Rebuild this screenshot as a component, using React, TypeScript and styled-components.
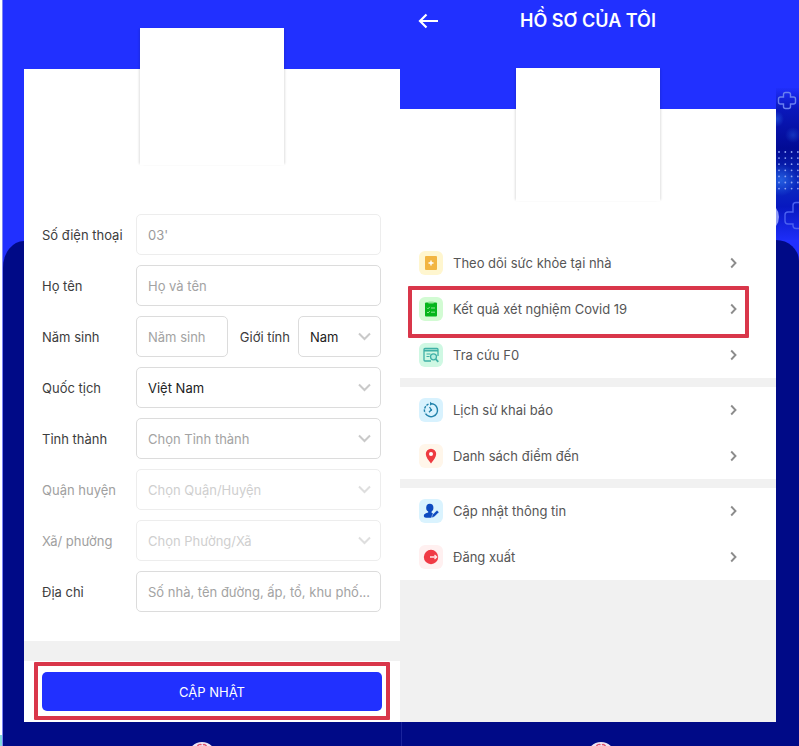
import React from "react";
import styled, { createGlobalStyle, css } from "styled-components";

const BLUE = "#2130ff";
const NAVY = "#000a87";
const GREY = "#f1f1f1";
const RED = "#d9364a";

const GlobalStyle = createGlobalStyle`
  *, *::before, *::after { box-sizing: border-box; }
  html, body { margin: 0; padding: 0; }
  body {
    background: ${NAVY};
    font-family: Inter, "Noto Sans", sans-serif;
    font-size: 13px;
    line-height: 20px;
    color: #3d3d3d;
  }
  button, input, select { font: inherit; margin: 0; }
`;

const Page = styled.div`
  display: grid;
  grid-template-columns: 3px 21px minmax(0, 1fr) minmax(0, 1fr) 23px;
  grid-template-rows: 1fr 24px;
  min-height: 100vh;
  overflow: hidden;
`;

const Edge = styled.div`
  grid-row: 1 / span 2;
  display: flex;
  flex-direction: column;
  justify-content: flex-end;
  background: #fff;
  border-right: 1px solid #7d85f5;

  &::after {
    content: "";
    height: 11px;
    background: #7fd8dc;
  }
`;

const Rail = styled.div`
  display: flex;
  flex-direction: column;
  background: ${BLUE};
`;

const RailTop = styled.div<{ $height: number }>`
  height: ${(p) => p.$height}px;
`;

const RailBase = styled.div<{ $side: "left" | "right" }>`
  flex: 1;
  background: ${NAVY};
  ${(p) =>
    p.$side === "left"
      ? css`border-top-left-radius: 22px 28px;`
      : css`border-top-right-radius: 24px 22px;`}
`;

const Art = styled.svg`
  display: block;
  width: 23px;
  height: 152px;
`;

const Screen = styled.div`
  display: flex;
  flex-direction: column;
  background: #fff;
`;

const Banner = styled.header<{ $height: number }>`
  height: ${(p) => p.$height}px;
  background: ${BLUE};
`;

const TitleBar = styled.div`
  display: grid;
  grid-template-columns: 1fr auto 1fr;
  align-items: center;
  height: 42px;
  padding: 0 18px;
`;

const Title = styled.h1`
  margin: 0;
  color: #fff;
  font-size: 18px;
  font-weight: 600;
  line-height: 40px;
`;

const BackButton = styled.button`
  display: flex;
  justify-self: start;
  padding: 0;
  border: 0;
  background: none;
  color: #fff;
  cursor: pointer;
`;

const Avatar = styled.div<{ $height: number }>`
  width: 144px;
  height: ${(p) => p.$height}px;
  margin: -41px auto 0;
  background: #fff;
  box-shadow: 2px 0 2px -1px rgba(0, 0, 0, 0.12), -2px 0 2px -1px rgba(0, 0, 0, 0.12);
`;

const Form = styled.form`
  display: flex;
  flex: 1;
  flex-direction: column;
`;

const Fields = styled.div`
  display: flex;
  flex-direction: column;
  gap: 10px;
  padding: 49px 19px 29px 18px;
`;

const Row = styled.div`
  display: flex;
  align-items: center;
  height: 41px;
`;

const Label = styled.label<{ $muted?: boolean }>`
  flex: 0 0 94px;
  color: ${(p) => (p.$muted ? "#a0a0a0" : "#3d3d3d")};
  white-space: nowrap;
`;

const InlineLabel = styled.label`
  flex: none;
  margin: 0 8px 0 12px;
  white-space: nowrap;
`;

const fieldBox = css`
  width: 100%;
  height: 41px;
  padding: 0 0 0 11px;
  border: 1px solid #dcdcdc;
  border-radius: 5px;
  background: #fff;
  outline: 0;
  text-overflow: ellipsis;

  &:disabled {
    border-color: #ededed;
    opacity: 1;
  }
`;

const Input = styled.input`
  ${fieldBox}
  flex: 1;
  min-width: 0;
  color: #9b9b9b;

  &::placeholder {
    color: #a3a3a3;
    opacity: 1;
  }
`;

const SelectWrap = styled.div<{ $narrow?: boolean }>`
  position: relative;
  flex: ${(p) => (p.$narrow ? "0 0 83px" : "1")};
  min-width: 0;
`;

const Select = styled.select<{ $tone: "value" | "hint" | "off" }>`
  ${fieldBox}
  appearance: none;
  color: ${(p) => ({ value: "#222", hint: "#a3a3a3", off: "#cfcfcf" })[p.$tone]};
`;

const SelectChevron = styled.svg<{ $light?: boolean }>`
  position: absolute;
  top: 16px;
  right: 10px;
  width: 13px;
  height: 9px;
  color: ${(p) => (p.$light ? "#dedede" : "#c9c9c9")};
  pointer-events: none;
`;

const Divider = styled.div`
  flex: 1 0 20px;
  background: ${GREY};
`;

const Actions = styled.div`
  padding: 1px 10px 2px;
`;

const ActionFrame = styled.div`
  padding: 6px 4px 5px;
  border: 4px solid ${RED};
  border-radius: 1px;
`;

const Submit = styled.button`
  display: block;
  width: 100%;
  height: 39px;
  border: 0;
  border-radius: 5px;
  background: ${BLUE};
  color: #fff;
  font-size: 13px;
  cursor: pointer;
`;

const Menu = styled.nav`
  display: flex;
  flex-direction: column;
  gap: 9px;
  margin-top: 39px;
  background: ${GREY};
`;

const MenuGroup = styled.ul`
  margin: 0;
  padding: 0;
  background: #fff;
  list-style: none;
`;

const MenuItem = styled.li<{ $marked?: boolean }>`
  position: relative;

  ${(p) =>
    p.$marked &&
    css`
      &::after {
        content: "";
        position: absolute;
        inset: 0 27px -6px 8px;
        border: 4px solid ${RED};
        border-radius: 1px;
        pointer-events: none;
      }
    `}
`;

const MenuLink = styled.a`
  display: flex;
  align-items: center;
  gap: 10px;
  height: 46px;
  padding: 0 39px 0 19px;
  color: #565656;
  text-decoration: none;
`;

const MenuText = styled.span`
  flex: 1;
`;

const Tile = styled.svg<{ $tint: string }>`
  width: 24px;
  height: 24px;
  border-radius: 6px;
  background: ${(p) => p.$tint};
`;

const Footer = styled.footer`
  grid-column: 2 / -1;
  display: grid;
  grid-template-columns: 1fr 1fr;
  overflow: hidden;
`;

const FooterCell = styled.div<{ $split?: boolean }>`
  display: flex;
  justify-content: center;
  align-items: flex-end;
  border-left: ${(p) => (p.$split ? "1px solid #1a249c" : "0")};
`;

const Badge = () => (
  <svg width="24" height="4" viewBox="0 0 24 4" aria-hidden="true">
    <circle cx="12" cy="14" r="14" fill="#efe3f2" />
    <path d="M7.500 4c1-1.500 3-1.800 4-1.200M13 2.800c1-.6 2.500 0 3.500 1.200" fill="none" stroke="#e0526b" strokeWidth="1.400" />
  </svg>
);

const BackdropArt = () => {
  const dots = [];
  for (let row = 0; row < 7; row++)
    for (let col = 0; col < 4; col++)
      dots.push(<circle key={`${row}-${col}`} cx={3 + col * 6.3} cy={64 + row * 6.1} r="0.900" fill="#8fa4f5" />);
  return (
    <Art viewBox="0 0 23 152" aria-hidden="true">
      <defs>
        <linearGradient id="sky" x1="0" y1="0" x2="0" y2="1">
          <stop offset="0" stopColor="#1f2efb" />
          <stop offset="0.14" stopColor="#0a18bb" />
          <stop offset="0.4" stopColor="#020b94" />
          <stop offset="0.62" stopColor="#0b2cc0" />
          <stop offset="0.78" stopColor="#0718c0" />
          <stop offset="1" stopColor="#1d2df8" />
        </linearGradient>
        <radialGradient id="glow">
          <stop offset="0" stopColor="#2a6ae8" stopOpacity="0.8" />
          <stop offset="1" stopColor="#2a6ae8" stopOpacity="0" />
        </radialGradient>
      </defs>
      <rect width="23" height="152" fill="url(#sky)" />
      <ellipse cx="1" cy="31" rx="7" ry="8" fill="url(#glow)" opacity="0.7" />
      <ellipse cx="17" cy="47" rx="8" ry="8" fill="url(#glow)" opacity="0.5" />
      <ellipse cx="5" cy="92" rx="16" ry="16" fill="url(#glow)" />
      {dots}
      <path
        d="M9.500 4.500h3a2 2 0 0 1 2 2v2.500h3a2 2 0 0 1 2 2v3a2 2 0 0 1-2 2h-3v2.500a2 2 0 0 1-2 2h-3a2 2 0 0 1-2-2v-2.500h-3a2 2 0 0 1-2-2v-3a2 2 0 0 1 2-2h3v-2.500a2 2 0 0 1 2-2z"
        fill="none"
        stroke="#6a80f0"
        strokeWidth="1.400"
      />
      <path
        d="M25 114.500h-5a3 3 0 0 0-3 3v6.500h-5a3 3 0 0 0-3 3v6a3 3 0 0 0 3 3h5v1.500a3 3 0 0 0 3 3h5"
        fill="none"
        stroke="#4a60f0"
        strokeWidth="1.400"
      />
      <ellipse cx="-8" cy="129" rx="11" ry="13" fill="#8e9af8" />
    </Art>
  );
};

const Chevron = () => (
  <svg width="7" height="12" viewBox="0 0 7 12" aria-hidden="true">
    <path d="M1.200 1.500 5.500 6 1.200 10.500" fill="none" stroke="#8c8c8c" strokeWidth="1.900" />
  </svg>
);

const icons = {
  home: (
    <Tile viewBox="0 0 24 24" $tint="#fff6cf" aria-hidden="true">
      <rect x="6" y="5" width="12" height="14" rx="1" fill="#f2b542" />
      <path d="M12 9.500v5M9.500 12h5" stroke="#fff" strokeWidth="1.400" />
    </Tile>
  ),
  result: (
    <Tile viewBox="0 0 24 24" $tint="#d2fbd3" aria-hidden="true">
      <rect x="6" y="5.500" width="12" height="14" rx="1" fill="#05b51c" />
      <rect x="9" y="4.500" width="6" height="2" rx="1" fill="#8ce592" />
      <path d="m8 10.800 1 1 1.800-1.900M12 11h4M8 15l1 1 1.800-1.900M12 15.200h4" fill="none" stroke="#8fe895" strokeWidth="1" />
    </Tile>
  ),
  lookup: (
    <Tile viewBox="0 0 24 24" $tint="#cff8e3" aria-hidden="true">
      <path d="M12 18H6a1 1 0 0 1-1-1V6.500a1 1 0 0 1 1-1h12a1 1 0 0 1 1 1V13" fill="none" stroke="#3fb0a6" strokeWidth="1.300" />
      <path d="M5 7.600h14" stroke="#3fb0a6" strokeWidth="1.800" />
      <path d="M7.500 11h4M7.500 13.500h3" stroke="#3fb0a6" strokeWidth="1" />
      <circle cx="14.500" cy="13.800" r="3" fill="#b5eee0" stroke="#3fb0a6" strokeWidth="1.300" />
      <path d="m16.700 16.200 2.600 2.600" stroke="#3fb0a6" strokeWidth="1.700" />
    </Tile>
  ),
  history: (
    <Tile viewBox="0 0 24 24" $tint="#d8f2fe" aria-hidden="true">
      <path d="M11.500 5.700a6.500 6.500 0 1 1-5 10" fill="none" stroke="#2383ac" strokeWidth="1.500" />
      <path d="M9.500 6.200A6.500 6.500 0 0 0 6 15" fill="none" stroke="#2383ac" strokeWidth="1.400" strokeDasharray="2.400 1" />
      <path d="m11 3.800 2.500 1.900-2.500 2z" fill="#2383ac" />
      <path d="m10.500 9 1.900 2.800-2.400 2.400" fill="none" stroke="#2383ac" strokeWidth="1.300" />
      <circle cx="12.200" cy="12" r="1" fill="#2383ac" />
    </Tile>
  ),
  places: (
    <Tile viewBox="0 0 24 24" $tint="#fff6ea" aria-hidden="true">
      <path d="M12 19.500C9.500 16 6.800 13.200 6.800 10a5.200 5.200 0 0 1 10.400 0c0 3.200-2.700 6-5.200 9.500z" fill="#ee3b41" />
      <circle cx="12" cy="10" r="2" fill="#fff" />
    </Tile>
  ),
  profile: (
    <Tile viewBox="0 0 24 24" $tint="#daf3fe" aria-hidden="true">
      <ellipse cx="10.800" cy="8.800" rx="3.600" ry="4" fill="#0e4bc0" />
      <path d="M9.200 11.500h3.400v2.300l1.600.9-1.800 4H7c-1.300 0-2.200-.7-2.200-1.900 0-2 2-2.600 4.400-3.300z" fill="#0e4bc0" />
      <path d="m12.600 19 .8-3.200 4.600-4.600 2 2-4.600 4.600z" fill="#0e4bc0" stroke="#daf3fe" strokeWidth="0.500" />
    </Tile>
  ),
  logout: (
    <Tile viewBox="0 0 24 24" $tint="#fff0f0" aria-hidden="true">
      <circle cx="12" cy="12" r="7.200" fill="#f03a45" />
      <path d="M11 12h6.500M15.500 10l2.200 2-2.200 2" fill="none" stroke="#ffe3e3" strokeWidth="1.300" />
    </Tile>
  ),
};

type MenuEntry = { text: string; icon: keyof typeof icons; marked?: boolean };

const groups: MenuEntry[][] = [
  [
    { text: "Theo dõi sức khỏe tại nhà", icon: "home" },
    { text: "Kết quả xét nghiệm Covid 19", icon: "result", marked: true },
    { text: "Tra cứu F0", icon: "lookup" },
  ],
  [
    { text: "Lịch sử khai báo", icon: "history" },
    { text: "Danh sách điểm đến", icon: "places" },
  ],
  [
    { text: "Cập nhật thông tin", icon: "profile" },
    { text: "Đăng xuất", icon: "logout" },
  ],
];

type DropdownProps = { id: string; text: string; tone: "value" | "hint" | "off"; narrow?: boolean };

const Dropdown = ({ id, text, tone, narrow }: DropdownProps) => (
  <SelectWrap $narrow={narrow}>
    <Select id={id} $tone={tone} disabled={tone === "off"}>
      <option>{text}</option>
    </Select>
    <SelectChevron viewBox="0 0 13 9" $light={tone === "off"} aria-hidden="true">
      <path d="M1 1.500 6.500 7 12 1.500" fill="none" stroke="currentColor" strokeWidth="2" />
    </SelectChevron>
  </SelectWrap>
);

export default function App() {
  return (
    <>
      <GlobalStyle />
      <Page>
        <Edge />
        <Rail>
          <RailTop $height={241} />
          <RailBase $side="left" />
        </Rail>

        <Screen>
          <Banner $height={69} />
          <Avatar $height={137} />
          <Form onSubmit={(e) => e.preventDefault()}>
            <Fields>
              <Row>
                <Label htmlFor="phone">Số điện thoại</Label>
                <Input id="phone" defaultValue="03'" disabled />
              </Row>
              <Row>
                <Label htmlFor="name">Họ tên</Label>
                <Input id="name" placeholder="Họ và tên" />
              </Row>
              <Row>
                <Label htmlFor="year">Năm sinh</Label>
                <Input id="year" placeholder="Năm sinh" />
                <InlineLabel htmlFor="gender">Giới tính</InlineLabel>
                <Dropdown id="gender" text="Nam" tone="value" narrow />
              </Row>
              <Row>
                <Label htmlFor="nation">Quốc tịch</Label>
                <Dropdown id="nation" text="Việt Nam" tone="value" />
              </Row>
              <Row>
                <Label htmlFor="province">Tỉnh thành</Label>
                <Dropdown id="province" text="Chọn Tỉnh thành" tone="hint" />
              </Row>
              <Row>
                <Label htmlFor="district" $muted>Quận huyện</Label>
                <Dropdown id="district" text="Chọn Quận/Huyện" tone="off" />
              </Row>
              <Row>
                <Label htmlFor="ward" $muted>Xã/ phường</Label>
                <Dropdown id="ward" text="Chọn Phường/Xã" tone="off" />
              </Row>
              <Row>
                <Label htmlFor="address">Địa chỉ</Label>
                <Input id="address" placeholder="Số nhà, tên đường, ấp, tổ, khu phố..." />
              </Row>
            </Fields>
            <Divider />
            <Actions>
              <ActionFrame>
                <Submit type="submit">CẬP NHẬT</Submit>
              </ActionFrame>
            </Actions>
          </Form>
        </Screen>

        <Screen>
          <Banner $height={109}>
            <TitleBar>
              <BackButton type="button" aria-label="Quay lại">
                <svg width="21" height="16" viewBox="0 0 21 16" aria-hidden="true">
                  <path d="M20 8H2.500M8.500 1.500 2 8l6.500 6.500" fill="none" stroke="currentColor" strokeWidth="2.200" />
                </svg>
              </BackButton>
              <Title>HỒ SƠ CỦA TÔI</Title>
            </TitleBar>
          </Banner>
          <Avatar $height={133} />
          <Menu>
            {groups.map((group, i) => (
              <MenuGroup key={i}>
                {group.map((item) => (
                  <MenuItem key={item.text} $marked={item.marked}>
                    <MenuLink href="#">
                      {icons[item.icon]}
                      <MenuText>{item.text}</MenuText>
                      <Chevron />
                    </MenuLink>
                  </MenuItem>
                ))}
              </MenuGroup>
            ))}
          </Menu>
          <Divider />
        </Screen>

        <Rail>
          <RailTop $height={88} />
          <BackdropArt />
          <RailBase $side="right" />
        </Rail>

        <Footer>
          <FooterCell>
            <Badge />
          </FooterCell>
          <FooterCell $split>
            <Badge />
          </FooterCell>
        </Footer>
      </Page>
    </>
  );
}
